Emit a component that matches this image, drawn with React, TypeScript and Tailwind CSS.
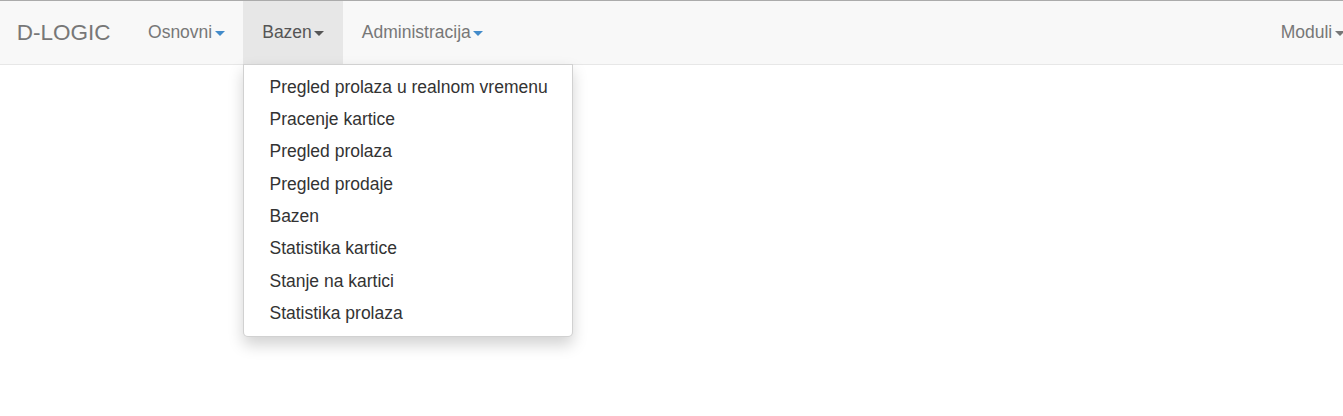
const menuItems = [
  'Pregled prolaza u realnom vremenu',
  'Pracenje kartice',
  'Pregled prolaza',
  'Pregled prodaje',
  'Bazen',
  'Statistika kartice',
  'Stanje na kartici',
  'Statistika prolaza',
];

function Caret({ color }: { color: string }) {
  return (
    <span
      className={`ml-[2.5px] inline-block h-0 w-0 border-x-[5px] border-t-[5px] border-x-transparent align-middle ${color}`}
    />
  );
}

export default function App() {
  return (
    <div className="h-[416px] w-full overflow-hidden bg-white font-['Liberation_Sans',Arial,sans-serif] text-[17.5px]">
      {/* --- Navbar --- */}
      <nav className="relative z-10 box-border flex h-[65px] border-t border-b border-t-[#ababab] border-b-[#e7e7e7] bg-[#f8f8f8]">
        <a className="block pl-[16.75px] pr-[18.75px] pt-[18.75px] text-[22.5px] leading-[25px] text-[#777]">D-LOGIC</a>

        <ul className="flex">
          <li>
            <a className="block px-[18.75px] pt-[18.75px] leading-[25px] text-[#777]">
              Osnovni
              <Caret color="border-t-[#428bca]" />
            </a>
          </li>
          <li className="relative">
            <a className="block h-[63px] bg-[#e7e7e7] px-[18.75px] pt-[18.75px] leading-[25px] text-[#555]">
              Bazen
              <Caret color="border-t-[#555]" />
            </a>
            {/* Dropdown */}
            <ul className="absolute left-0 top-full box-border w-[330px] rounded-b-[5px] border border-[#ccc]/90 bg-white py-[6.25px] shadow-[0_7.5px_15px_rgba(0,0,0,0.175)]">
              {menuItems.map((item) => (
                <li key={item}>
                  <a className="block whitespace-nowrap px-[25px] py-[3.65px] leading-[25px] text-[#333]">{item}</a>
                </li>
              ))}
            </ul>
          </li>
          <li>
            <a className="block px-[18.75px] pt-[18.75px] leading-[25px] text-[#777]">
              Administracija
              <Caret color="border-t-[#428bca]" />
            </a>
          </li>
        </ul>

        <ul className="ml-auto mr-[-20.5px] flex">
          <li>
            <a className="block whitespace-nowrap px-[18.75px] pt-[18.75px] leading-[25px] text-[#777]">
              Moduli
              <Caret color="border-t-[#777]" />
            </a>
          </li>
        </ul>
      </nav>
    </div>
  );
}
